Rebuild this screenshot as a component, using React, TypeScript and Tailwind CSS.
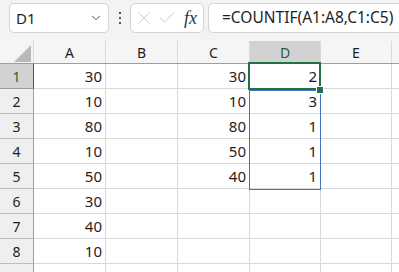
import { ChevronDown, X, Check } from 'lucide-react'

const COLS = ['A', 'B', 'C', 'D', 'E']
const COL_W = ['w-[72px]', 'w-[72px]', 'w-[72px]', 'w-[71px]', 'w-[71px]']
const A = [30, 10, 80, 10, 50, 30, 40, 10]
const C = [30, 10, 80, 50, 40]
const D = [2, 3, 1, 1, 1]

const font = { fontFamily: '"Noto Sans", "Liberation Sans", sans-serif' }

function Cell({ w, v, last }: { w: string; v?: number | string; last?: boolean }) {
  return (
    <div className={`${w} ${last ? 'flex-1' : 'shrink-0 border-r'} h-[25px] border-b border-[#d9d9d9] flex items-center justify-end pr-[3px] text-[15px] text-[#1e1e1e]`}>
      {v}
    </div>
  )
}

export default function App() {
  return (
    <div className="w-[399px] h-[272px] overflow-hidden bg-[#f3f3f3] select-none" style={font}>
      {/* Formula bar */}
      <div className="h-[40px] flex items-start pt-[3px]">
        <div className="ml-[9px] w-[100px] h-[30px] bg-white border border-[#d4d4d4] rounded-[5px] flex items-center justify-between pl-[6px] pr-[5px]">
          <span className="text-[15px] text-[#1e1e1e]">D1</span>
          <ChevronDown size={14} strokeWidth={1.6} className="text-[#444]" />
        </div>
        <div className="w-[21px] h-[30px] flex flex-col items-center justify-center gap-[3px]">
          <span className="w-[2px] h-[2px] bg-[#555]" />
          <span className="w-[2px] h-[2px] bg-[#555]" />
          <span className="w-[2px] h-[2px] bg-[#555]" />
        </div>
        <div className="w-[74px] h-[30px] bg-white border border-[#d4d4d4] rounded-[5px] flex items-center pl-[3px] gap-[3px]">
          <X size={20} strokeWidth={1} className="text-[#c4c4c4]" />
          <Check size={20} strokeWidth={1} className="text-[#c4c4c4]" />
          <span className="ml-[4px] text-[18px] italic text-[#333]" style={{ fontFamily: '"Liberation Serif", serif' }}>
            fx
          </span>
        </div>
        <div className="ml-[4px] flex-1 h-[30px] bg-white border border-[#d4d4d4] rounded-l-[5px] border-r-0 flex items-center pl-[13px] text-[15.5px] text-[#1e1e1e] whitespace-nowrap overflow-hidden">
          =COUNTIF(A1:A8,C1:C5)
        </div>
      </div>

      {/* Sheet */}
      <div className="relative bg-white">
        <div className="flex h-[24px] bg-[#f5f5f5] border-b border-[#9e9e9e]">
          <div className="w-[34px] shrink-0 border-r border-[#d9d9d9] relative">
            <div
              className="absolute right-[2px] bottom-[1px] w-[17px] h-[17px] bg-[#b9b9b9]"
              style={{ clipPath: 'polygon(100% 0, 100% 100%, 0 100%)' }}
            />
          </div>
          {COLS.map((c, i) => (
            <div
              key={c}
              className={`${COL_W[i]} shrink-0 border-r border-[#d9d9d9] mt-[1px] flex items-center justify-center text-[14px] ${c === 'D' ? 'bg-[#d2d2d2] text-[#1f5c3a]' : 'text-[#1e1e1e]'}`}
            >
              {c}
            </div>
          ))}
          <div className="flex-1" />
        </div>

        {Array.from({ length: 9 }).map((_, r) => (
          <div key={r} className="flex">
            <div
              className={`w-[34px] shrink-0 h-[25px] border-b border-r flex items-center justify-center text-[14px] ${
                r === 0 ? 'bg-[#d2d2d2] text-[#1f5c3a] border-r-[#217346] border-b-[#9e9e9e]' : 'bg-[#efefef] text-[#1e1e1e] border-[#9e9e9e] border-b-[#bdbdbd]'
              }`}
            >
              {r < 8 ? r + 1 : ''}
            </div>
            <Cell w={COL_W[0]} v={A[r]} />
            <Cell w={COL_W[1]} />
            <Cell w={COL_W[2]} v={C[r]} />
            <Cell w={COL_W[3]} v={D[r]} />
            <Cell w={COL_W[4]} />
            <Cell w="" last />
          </div>
        ))}

        {/* D2:D5 reference range */}
        <div className="absolute left-[249px] top-[50px] w-[72px] h-[100px] border border-[#4472c4] pointer-events-none" />
        {/* Active cell D1 */}
        <div className="absolute left-[248px] top-[22px] w-[73px] h-[28px] border-2 border-[#217346] pointer-events-none" />
        <div className="absolute left-[316px] top-[46px] w-[6px] h-[6px] bg-[#217346] border border-white box-content" />
      </div>
    </div>
  )
}
